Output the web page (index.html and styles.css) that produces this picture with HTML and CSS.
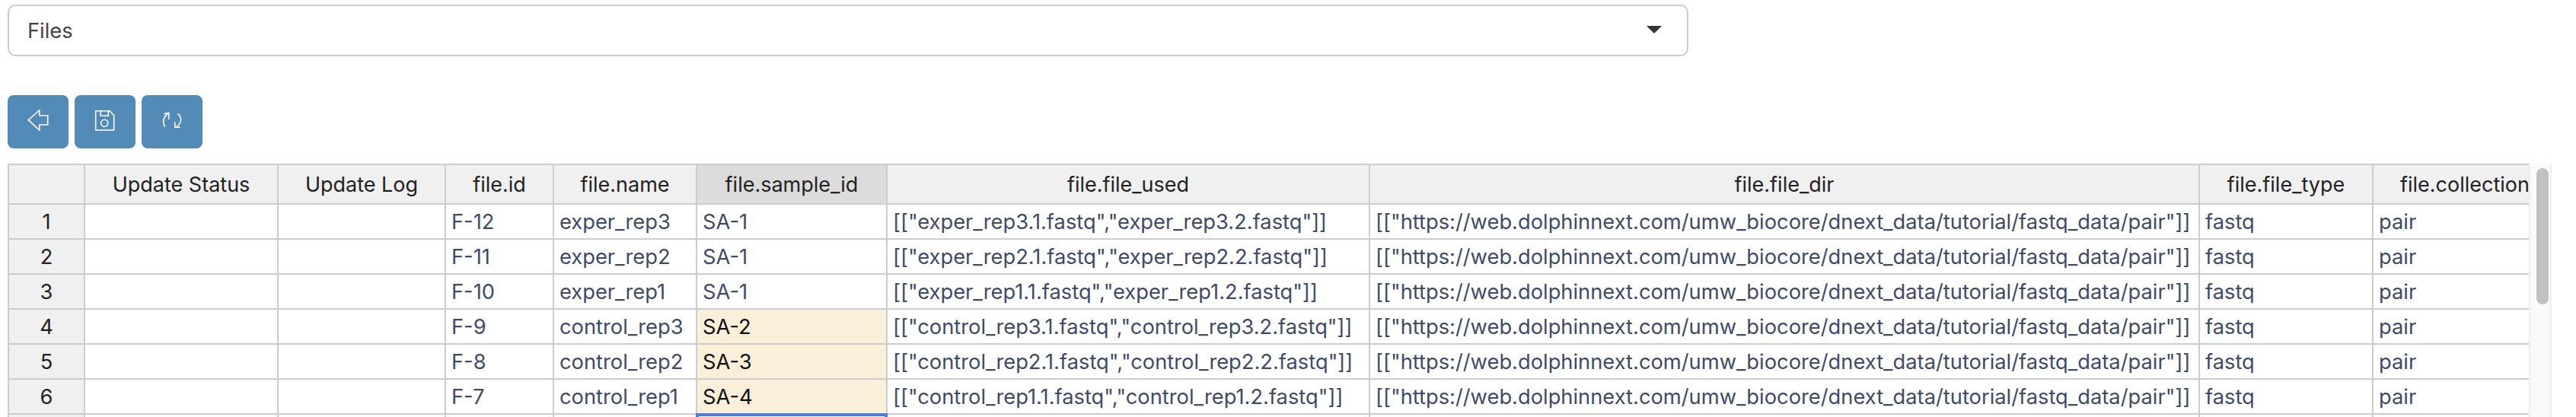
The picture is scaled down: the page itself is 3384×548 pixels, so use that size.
FILE: index.html
```html
<!DOCTYPE html>
<html lang="en">
<head>
  <meta charset="UTF-8">
  <title>Files</title>
  <link rel="stylesheet" href="styles.css">
</head>
<body>

  <div class="select-box">
    <span>Files</span>
    <span class="caret"></span>
  </div>

  <div class="toolbar">
    <button class="tool-btn">
      <svg viewBox="0 0 32 32"><path d="M3.3 13.7 17.7 1v6.7h11V20h-11v7z"/></svg>
    </button>
    <button class="tool-btn">
      <svg viewBox="0 0 32 32"><path d="M3.7 1.7H22l5.7 5.8V27H3.7z"/><path d="M10.3 1.7v6.6h10V1.7"/><circle cx="15.3" cy="17.7" r="4.5"/></svg>
    </button>
    <button class="tool-btn">
      <svg viewBox="0 0 32 32"><path d="M7 22.7C3.5 18.5 3.6 10 11 5"/><path d="M5 5.7l6.7-1.4v8.4"/><path d="M23.7 5.3C29.5 10.500 29 18 21 23.300"/><path d="M19.700 16v7.300H27"/></svg>
    </button>
  </div>

  <div class="grid-wrap">
    <div class="grid-scroll">
      <table class="grid">
        <colgroup>
          <col class="c-index"><col class="c-status"><col class="c-log"><col class="c-id"><col class="c-name">
          <col class="c-sample"><col class="c-used"><col class="c-dir"><col class="c-type"><col class="c-coll">
        </colgroup>
        <thead>
          <tr>
            <th></th>
            <th>Update Status</th>
            <th>Update Log</th>
            <th>file.id</th>
            <th>file.name</th>
            <th class="active-col">file.sample_id</th>
            <th>file.file_used</th>
            <th>file.file_dir</th>
            <th>file.file_type</th>
            <th>file.collection</th>
          </tr>
        </thead>
        <tbody>
          <tr>
            <th>1</th><td></td><td></td><td>F-12</td><td>exper_rep3</td><td>SA-1</td>
            <td>[["exper_rep3.1.fastq","exper_rep3.2.fastq"]]</td>
            <td>[["https://web.dolphinnext.com/umw_biocore/dnext_data/tutorial/fastq_data/pair"]]</td>
            <td>fastq</td><td>pair</td>
          </tr>
          <tr>
            <th>2</th><td></td><td></td><td>F-11</td><td>exper_rep2</td><td>SA-1</td>
            <td>[["exper_rep2.1.fastq","exper_rep2.2.fastq"]]</td>
            <td>[["https://web.dolphinnext.com/umw_biocore/dnext_data/tutorial/fastq_data/pair"]]</td>
            <td>fastq</td><td>pair</td>
          </tr>
          <tr>
            <th>3</th><td></td><td></td><td>F-10</td><td>exper_rep1</td><td>SA-1</td>
            <td>[["exper_rep1.1.fastq","exper_rep1.2.fastq"]]</td>
            <td>[["https://web.dolphinnext.com/umw_biocore/dnext_data/tutorial/fastq_data/pair"]]</td>
            <td>fastq</td><td>pair</td>
          </tr>
          <tr>
            <th>4</th><td></td><td></td><td>F-9</td><td>control_rep3</td><td class="edited">SA-2</td>
            <td>[["control_rep3.1.fastq","control_rep3.2.fastq"]]</td>
            <td>[["https://web.dolphinnext.com/umw_biocore/dnext_data/tutorial/fastq_data/pair"]]</td>
            <td>fastq</td><td>pair</td>
          </tr>
          <tr>
            <th>5</th><td></td><td></td><td>F-8</td><td>control_rep2</td><td class="edited">SA-3</td>
            <td>[["control_rep2.1.fastq","control_rep2.2.fastq"]]</td>
            <td>[["https://web.dolphinnext.com/umw_biocore/dnext_data/tutorial/fastq_data/pair"]]</td>
            <td>fastq</td><td>pair</td>
          </tr>
          <tr>
            <th>6</th><td></td><td></td><td>F-7</td><td>control_rep1</td><td class="edited">SA-4</td>
            <td>[["control_rep1.1.fastq","control_rep1.2.fastq"]]</td>
            <td>[["https://web.dolphinnext.com/umw_biocore/dnext_data/tutorial/fastq_data/pair"]]</td>
            <td>fastq</td><td>pair</td>
          </tr>
          <tr>
            <th></th><td></td><td></td><td></td><td></td><td class="selected"><div class="sel-border"></div></td><td></td><td></td><td></td><td></td>
          </tr>
        </tbody>
      </table>
    </div>
    <div class="scrollbar"><div class="thumb"></div></div>
  </div>

</body>
</html>
```

FILE: styles.css
```css
* { margin: 0; padding: 0; box-sizing: border-box; }
html, body { height: 100%; }
body {
  font-family: Inter, "Noto Sans", sans-serif;
  font-size: 27.3px;
  background-color: white;
  color: #444;
  overflow: hidden;
  padding: 6px 0 0 10px;
}

/* dropdown */
.select-box {
  display: flex;
  align-items: center;
  justify-content: space-between;
  width: 2208px;
  height: 68px;
  padding: 0 33px 0 24px;
  border: 2px solid #ccc;
  border-radius: 10px;
}

.caret {
  margin-bottom: 3px;
  border-top: 10px solid #333;
  border-left: 10px solid transparent;
  border-right: 10px solid transparent;
}

/* buttons */
.toolbar {
  display: flex;
  gap: 8px;
  margin-top: 51px;
}

.tool-btn {
  display: flex;
  align-items: center;
  justify-content: center;
  width: 80px;
  height: 70px;
  background-color: #528ab8;
  border: none;
  border-radius: 8px;
}

.tool-btn svg {
  width: 32px;
  height: 32px;
  fill: none;
  stroke: white;
  stroke-width: 1.6;
}

/* table */
.grid-wrap {
  display: flex;
  margin-top: 20px;
  height: 340px;
}

.grid-scroll {
  width: 3312px;
  overflow: hidden;
}

.grid {
  table-layout: fixed;
  border-collapse: separate;
  border-spacing: 0;
  width: 3350px;
}

.c-index  { width: 102px; }
.c-status { width: 254px; }
.c-log    { width: 220px; }
.c-id     { width: 142px; }
.c-name   { width: 188px; }
.c-sample { width: 250px; }
.c-used   { width: 634px; }
.c-dir    { width: 1090px; }
.c-type   { width: 228px; }
.c-coll   { width: 242px; }

.grid th, .grid td {
  height: 46px;
  border-right: 2px solid #ccc;
  border-bottom: 2px solid #ccc;
  font-weight: normal;
  white-space: nowrap;
  overflow: hidden;
}

.grid th {
  background-color: #f0f0f0;
  color: #222;
  text-align: center;
}

.grid td {
  padding: 0 7px;
  color: #3f4b66;
}

.grid thead th {
  height: 54px;
  border-top: 2px solid #ccc;
  font-size: 27px;
}

.grid tr > :first-child { border-left: 2px solid #ccc; }

.grid th.active-col { background-color: #dcdcdc; }

.grid td.edited {
  background-color: #faefd9;
  color: #111;
}

.grid td.selected {
  position: relative;
  overflow: visible;
}

/* selection outline of the cell under the last visible row */
.sel-border {
  position: absolute;
  top: -2px;
  left: -2px;
  right: -2px;
  height: 20px;
  border-top: 4px solid #4b7bec;
  border-left: 4px solid #4b7bec;
  border-right: 4px solid #4b7bec;
}

/* scrollbar */
.scrollbar {
  width: 30px;
  padding: 6px 6px 0 8px;
  background-color: #fafafa;
  border-left: 2px solid #eee;
  border-right: 2px solid #eee;
}

.thumb {
  width: 16px;
  height: 179px;
  background-color: #c1c1c1;
  border-radius: 8px;
}
```
